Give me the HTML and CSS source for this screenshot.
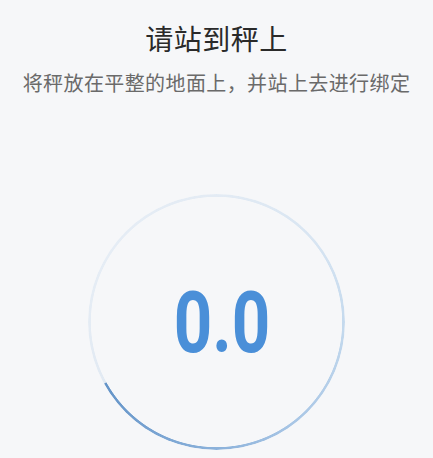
FILE: index.html
```html
<!DOCTYPE html>
<html lang="zh-CN">
<head>
<meta charset="utf-8">
<link rel="stylesheet" href="styles.css">
</head>
<body>
<main class="page">
  <h1 class="title">请站到秤上</h1>
  <p class="subtitle">将秤放在平整的地面上，并站上去进行绑定</p>
  <div class="dial">
    <div class="ring"></div>
    <div class="value">0.0</div>
  </div>
</main>
</body>
</html>
```
FILE: styles.css
```css
html, body {
  margin: 0;
  padding: 0;
  background: #f6f7f9;
}
.page {
  width: 433px;
  height: 458px;
  overflow: hidden;
  display: flex;
  flex-direction: column;
  align-items: center;
  font-family: "Noto Sans CJK SC", "Noto Sans", sans-serif;
}
.title {
  margin: 22px 0 0;
  font-size: 28px;
  line-height: 32px;
  font-weight: 400;
  color: #2a2a2a;
  letter-spacing: 0.5px;
}
.subtitle {
  margin: 17px 0 0;
  font-size: 20px;
  line-height: 24px;
  color: #6a6a6a;
  letter-spacing: 0.4px;
}
.dial {
  margin-top: 99px;
  display: grid;
  width: 257px;
  height: 256px;
}
.ring, .value {
  grid-area: 1 / 1;
}
.ring {
  border-radius: 50%;
  background: conic-gradient(
    #e3ebf4 0deg,
    #d8e5f2 50deg,
    #c2d8ed 95deg,
    #a7c5e5 145deg,
    #88afd9 185deg,
    #6494c8 241deg,
    #e2eaf3 241.5deg,
    #e6edf5 300deg,
    #e3ebf4 360deg
  );
  -webkit-mask: radial-gradient(closest-side, transparent calc(100% - 3.2px), #000 calc(100% - 2.5px));
  mask: radial-gradient(closest-side, transparent calc(100% - 3.2px), #000 calc(100% - 2.5px));
}
.value {
  align-self: center;
  justify-self: center;
  font-family: Roboto, "Liberation Sans", sans-serif;
  font-weight: 700;
  font-size: 85px;
  line-height: 1;
  color: #4a8fd8;
  transform: translate(6px, 1px) scaleX(0.79);
}
```
